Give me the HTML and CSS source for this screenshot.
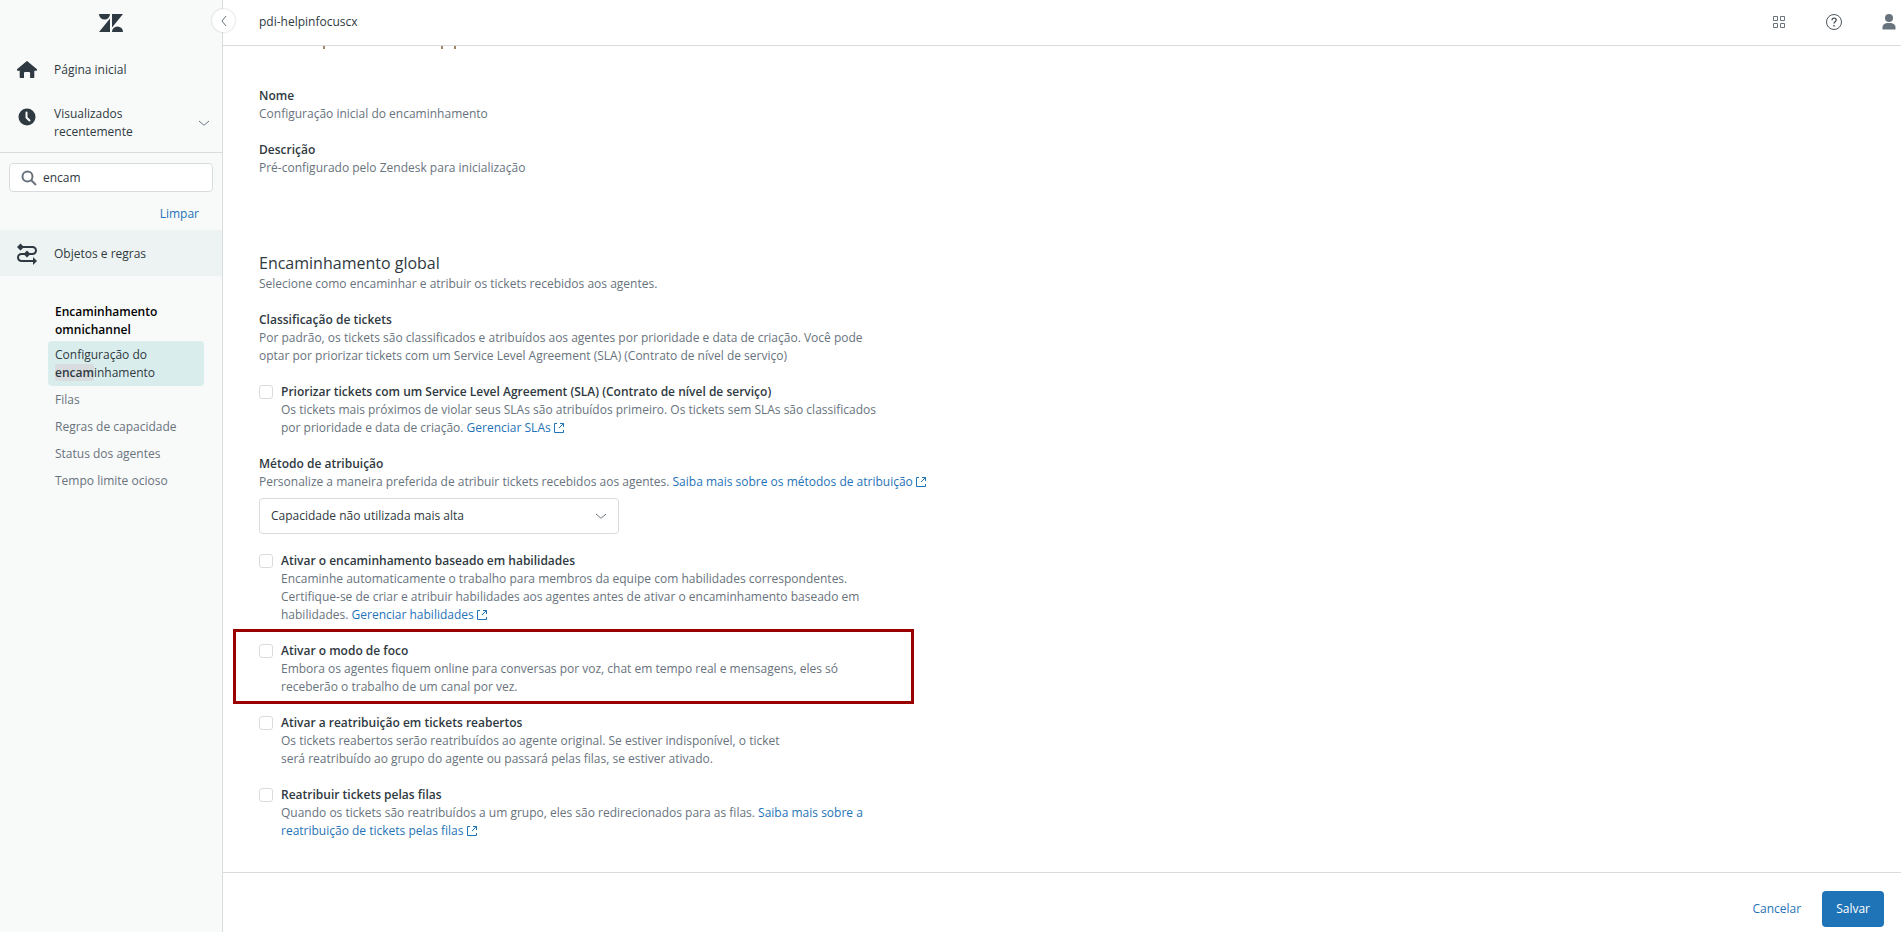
FILE: index.html
```html
<!DOCTYPE html>
<html lang="pt-BR">
<head>
  <meta charset="UTF-8">
  <meta name="viewport" content="width=device-width, initial-scale=1.0">
  <title>Configuração do encaminhamento</title>
  <link rel="stylesheet" href="styles.css">
</head>
<body>
  <!-- external link icon, reused by every help link -->
  <svg class="sprite" aria-hidden="true">
    <symbol id="external" viewBox="0 0 10 10">
      <path d="M3 .5H.5v9h9V7M6 .5h3.500V4M9.500.5 5 5" fill="none" stroke="currentColor"/>
    </symbol>
  </svg>

  <div class="app">
    <aside class="sidebar">
      <a class="logo" href="#" aria-label="Zendesk">
        <svg width="24" height="18" viewBox="0 0 24 18" fill="currentColor">
          <path d="M11 4.500V18H0zM11 0a5.500 5.500 0 0 1-11 0zM13 13.500V0h11zM13 18a5.500 5.500 0 0 1 11 0z"/>
        </svg>
      </a>
      <button class="collapse" aria-label="Recolher menu">
        <svg width="12" height="12" viewBox="0 0 12 12" fill="none" stroke="currentColor"><path d="M8 1 4 6l4 5"/></svg>
      </button>

      <nav class="menu">
        <a class="menu-item" href="#">
          <svg width="20" height="18" viewBox="0 0 20 18" fill="currentColor"><path d="M9.300.4a1 1 0 0 1 1.400 0l9 7.600c.7.700.3 1.800-.7 1.800h-1.700V16c0 .6-.4 1-1 1h-3.200V12a1 1 0 0 0-1-1H8a1 1 0 0 0-1 1v5H3.700c-.6 0-1-.4-1-1V9.800H1C0 9.800-.4 8.700.3 8z"/></svg>
          <span>Página inicial</span>
        </a>
        <button class="menu-item recent">
          <svg width="20" height="22" viewBox="0 0 20 22"><circle cx="10" cy="12" r="8.500" fill="currentColor"/><path d="M9.500 7.500v5l3 3" fill="none" stroke="#f8f9f9" stroke-width="2" stroke-linecap="round"/></svg>
          <span>Visualizados recentemente</span>
          <svg class="chevron" width="12" height="12" viewBox="0 0 12 12" fill="none" stroke="currentColor"><path d="m1 4 4.300 3.700q.7.600 1.400 0L11 4"/></svg>
        </button>
      </nav>

      <div class="search">
        <label class="search-box">
          <svg width="16" height="16" viewBox="0 0 16 16" fill="none" stroke="currentColor" stroke-width="2"><circle cx="6.500" cy="6.500" r="5"/><path d="m10 10 5 5"/></svg>
          <input type="text" value="encam" aria-label="Pesquisar">
        </label>
        <button class="clear">Limpar</button>
      </div>

      <a class="menu-item section" href="#">
        <svg width="20" height="22" viewBox="0 0 20 22" fill="none" stroke="currentColor" stroke-width="2">
          <path d="M3 4h12.500a3.500 3.500 0 0 1 0 7h-11a3.500 3.500 0 0 0 0 7H17"/>
          <path d="m3.500.5 3.500 3.500-3.500 3.500L0 4zM10 7.500l3.500 3.500-3.500 3.500L6.500 11zM16 14l4 4-4 4z" fill="currentColor" stroke="none"/>
        </svg>
        <span>Objetos e regras</span>
      </a>

      <div class="submenu">
        <h2>Encaminhamento omnichannel</h2>
        <a class="active" href="#">Configuração do <mark>encam</mark>inhamento</a>
        <a href="#">Filas</a>
        <a href="#">Regras de capacidade</a>
        <a href="#">Status dos agentes</a>
        <a href="#">Tempo limite ocioso</a>
      </div>
    </aside>

    <div class="page">
      <header class="topbar">
        <span class="account">pdi-helpinfocuscx</span>
        <div class="tools">
          <button aria-label="Produtos">
            <svg width="14" height="14" viewBox="0 0 14 14" fill="none" stroke="currentColor"><path d="M1.500 1.500h4v4h-4zM8.500 1.500h4v4h-4zM1.500 8.500h4v4h-4zM8.500 8.500h4v4h-4z"/></svg>
          </button>
          <button aria-label="Ajuda">
            <svg width="18" height="18" viewBox="0 0 18 18" fill="none" stroke="#49545c"><circle cx="9" cy="9" r="7.500"/><path d="M7 7.200C7 4.300 11.200 4.500 11.200 7c0 1.700-2.200 1.700-2.200 3.500" stroke-width="1.300"/><path d="M9 12v1.500" stroke-width="1.500"/></svg>
          </button>
          <button aria-label="Perfil">
            <svg width="14" height="16" viewBox="0 0 14 16" fill="currentColor"><circle cx="7" cy="4" r="4"/><path d="M.5 15.500v-2C.5 10.500 3 9.500 5 9h4c2 .5 4.500 1.500 4.500 4.500v2z"/></svg>
          </button>
        </div>
      </header>

      <main class="content">
        <!-- descenders of the line scrolled under the top bar -->
        <svg class="scrolled" width="200" height="3" viewBox="0 0 200 3" fill="currentColor" aria-hidden="true"><path d="M64 0h2v3h-2zM182 0h2v3h-2zM195 0h2v3h-2z"/></svg>

        <dl class="details">
          <dt>Nome</dt>
          <dd>Configuração inicial do encaminhamento</dd>
          <dt>Descrição</dt>
          <dd>Pré-configurado pelo Zendesk para inicialização</dd>
        </dl>

        <h1>Encaminhamento global</h1>
        <p>Selecione como encaminhar e atribuir os tickets recebidos aos agentes.</p>

        <section class="group">
          <h3>Classificação de tickets</h3>
          <p>Por padrão, os tickets são classificados e atribuídos aos agentes por prioridade e data de criação. Você pode<br>optar por priorizar tickets com um Service Level Agreement (SLA) (Contrato de nível de serviço)</p>
        </section>

        <div class="option">
          <input type="checkbox" id="sla">
          <div>
            <label for="sla">Priorizar tickets com um Service Level Agreement (SLA) (Contrato de nível de serviço)</label>
            <p>Os tickets mais próximos de violar seus SLAs são atribuídos primeiro. Os tickets sem SLAs são classificados<br>por prioridade e data de criação. <a href="#">Gerenciar SLAs <svg class="ext"><use href="#external"/></svg></a></p>
          </div>
        </div>

        <section class="group">
          <h3><label for="method">Método de atribuição</label></h3>
          <p>Personalize a maneira preferida de atribuir tickets recebidos aos agentes. <a href="#">Saiba mais sobre os métodos de atribuição <svg class="ext"><use href="#external"/></svg></a></p>
          <div class="select">
            <select id="method">
              <option>Capacidade não utilizada mais alta</option>
            </select>
            <svg class="chevron" width="12" height="12" viewBox="0 0 12 12" fill="none" stroke="currentColor"><path d="m1 4 4.300 3.700q.7.600 1.400 0L11 4"/></svg>
          </div>
        </section>

        <div class="option">
          <input type="checkbox" id="skills">
          <div>
            <label for="skills">Ativar o encaminhamento baseado em habilidades</label>
            <p>Encaminhe automaticamente o trabalho para membros da equipe com habilidades correspondentes.<br>Certifique-se de criar e atribuir habilidades aos agentes antes de ativar o encaminhamento baseado em<br>habilidades. <a href="#">Gerenciar habilidades <svg class="ext"><use href="#external"/></svg></a></p>
          </div>
        </div>

        <div class="option highlighted">
          <input type="checkbox" id="focus">
          <div>
            <label for="focus">Ativar o modo de foco</label>
            <p>Embora os agentes fiquem online para conversas por voz, chat em tempo real e mensagens, eles só<br>receberão o trabalho de um canal por vez.</p>
          </div>
        </div>

        <div class="option">
          <input type="checkbox" id="reopened">
          <div>
            <label for="reopened">Ativar a reatribuição em tickets reabertos</label>
            <p>Os tickets reabertos serão reatribuídos ao agente original. Se estiver indisponível, o ticket<br>será reatribuído ao grupo do agente ou passará pelas filas, se estiver ativado.</p>
          </div>
        </div>

        <div class="option">
          <input type="checkbox" id="queues">
          <div>
            <label for="queues">Reatribuir tickets pelas filas</label>
            <p>Quando os tickets são reatribuídos a um grupo, eles são redirecionados para as filas. <a href="#">Saiba mais sobre a<br>reatribuição de tickets pelas filas <svg class="ext"><use href="#external"/></svg></a></p>
          </div>
        </div>
      </main>

      <footer class="actions">
        <button class="cancel">Cancelar</button>
        <button class="save">Salvar</button>
      </footer>
    </div>
  </div>
</body>
</html>
```
FILE: styles.css
```css
*, *::after {
  box-sizing: border-box;
}

body {
  margin: 0;
  font-family: "Open Sans", "Noto Sans", sans-serif;
  font-size: 12px;
  line-height: 18px;
  color: #2f3941;
  background: #fff;
}

h1, h2, h3, p, dl, dd {
  margin: 0;
}

a {
  color: #1f73b7;
  text-decoration: none;
}

button, input, select {
  font: inherit;
  color: inherit;
}

button {
  padding: 0;
  border: none;
  background: none;
  cursor: pointer;
}

svg {
  flex-shrink: 0;
}

.sprite {
  display: none;
}

.app {
  display: flex;
  height: 100vh;
}

/* Sidebar */
.sidebar {
  position: relative;
  flex: 0 0 223px;
  min-width: 0;
  background: #f8f9f9;
  border-right: 1px solid #d8dcde;
}

.logo {
  display: flex;
  justify-content: center;
  align-items: center;
  height: 46px;
  color: #2f3941;
}

.collapse {
  position: absolute;
  top: 9px;
  right: -13px;
  display: flex;
  align-items: center;
  justify-content: center;
  width: 23px;
  height: 23px;
  border-radius: 50%;
  background: #fff;
  box-shadow: 0 0 2px rgba(47, 57, 65, 0.3);
  color: #68737d;
}

.menu {
  border-bottom: 1px solid #d8dcde;
}

.menu-item {
  display: flex;
  align-items: center;
  gap: 17px;
  width: 100%;
  min-height: 46px;
  padding: 2px 12px 0 17px;
  color: #2f3941;
  font-weight: 500;
  text-align: left;
}

.menu-item span {
  flex: 1;
}

.recent {
  align-items: flex-start;
  padding: 13px 12px 11px 17px;
}

.chevron {
  color: #68737d;
}

.recent .chevron {
  align-self: center;
}

.search {
  padding: 10px 9px 7px;
}

.search-box {
  display: flex;
  align-items: center;
  gap: 6px;
  height: 29px;
  padding: 0 11px;
  border: 1px solid #d8dcde;
  border-radius: 4px;
  background: #fff;
  color: #68737d;
}

.search-box input {
  flex: 1;
  width: 100%;
  min-width: 0;
  padding: 0;
  border: none;
  outline: none;
  background: none;
  color: #2f3941;
}

.clear {
  display: block;
  margin: 13px 14px 0 auto;
  color: #1f73b7;
}

.section {
  background: #edf2f2;
}

.submenu {
  display: flex;
  flex-direction: column;
  padding: 27px 18px 0 48px;
}

.submenu h2 {
  padding: 0 7px;
  margin-bottom: 2px;
  font-size: 12px;
  line-height: 18px;
  font-weight: 600;
  color: #000;
}

.submenu a {
  padding: 5px 7px 4px;
  color: #68737d;
  border-radius: 4px;
}

.submenu .active {
  background: #daeded;
  color: #2f3941;
}

.submenu mark {
  background: #d8dcde;
  border-radius: 2px;
  color: inherit;
  font-weight: 600;
}

/* Page */
.page {
  flex: 1;
  display: flex;
  flex-direction: column;
  min-width: 0;
}

.topbar {
  display: flex;
  justify-content: space-between;
  align-items: center;
  height: 46px;
  padding: 0 5px 2px 36px;
  border-bottom: 1px solid #d8dcde;
}

.account {
  font-weight: 500;
}

.tools {
  display: flex;
  align-items: center;
  gap: 39px;
  color: #68737d;
}

.tools button {
  display: flex;
}

.content {
  flex: 1;
  min-height: 0;
  overflow: hidden;
  padding: 0 36px;
  color: #68737d;
}

.scrolled {
  display: block;
  margin-bottom: 38px;
  color: #a08468;
}

.details {
  margin-bottom: 74px;
}

.details dt, h3, .option label {
  display: block;
  font-size: 12px;
  font-weight: 600;
  color: #2f3941;
}

.details dd {
  margin-bottom: 18px;
}

h1 {
  font-size: 16px;
  line-height: 24px;
  font-weight: 400;
  color: #2f3941;
}

.group {
  margin-top: 18px;
}

.option {
  position: relative;
  display: flex;
  align-items: flex-start;
  gap: 8px;
  margin-top: 18px;
}

.option input {
  appearance: none;
  flex-shrink: 0;
  width: 14px;
  height: 14px;
  margin: 2px 0 0;
  border: 1px solid #d8dcde;
  border-radius: 3px;
  background: #fff;
}

.option input:checked {
  background: #1f73b7;
  border-color: #1f73b7;
}

/* red frame drawn over the focus mode option */
.highlighted::after {
  content: "";
  position: absolute;
  top: -13px;
  bottom: -8px;
  left: -26px;
  width: 681px;
  border: 3px solid #990000;
  pointer-events: none;
}

.ext {
  width: 10px;
  height: 10px;
  vertical-align: -1px;
}

.select {
  position: relative;
  width: 360px;
  margin-top: 7px;
}

.select select {
  appearance: none;
  width: 100%;
  height: 36px;
  padding: 0 32px 0 11px;
  border: 1px solid #d8dcde;
  border-radius: 4px;
  background: #fff;
  color: #2f3941;
}

.select .chevron {
  position: absolute;
  top: 12px;
  right: 12px;
  pointer-events: none;
}

/* Footer */
.actions {
  display: flex;
  justify-content: flex-end;
  align-items: center;
  gap: 21px;
  height: 60px;
  padding: 12px 17px 0 0;
  border-top: 1px solid #d8dcde;
}

.actions button {
  height: 36px;
}

.cancel {
  color: #1f73b7;
}

.actions .save {
  padding: 0 14px;
  border-radius: 4px;
  background: #1f73b7;
  color: #fff;
}
```
